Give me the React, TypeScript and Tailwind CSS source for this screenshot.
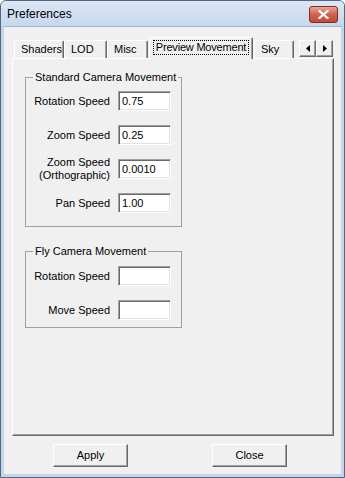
import React from "react";

const font = { fontFamily: '"Liberation Sans", Arial, sans-serif' };

const Edit = ({ value }: { value?: string }) => (
  <div className="w-[53px] h-[20px] bg-white border border-t-[#a0a0a0] border-l-[#a0a0a0] border-b-white border-r-white shadow-[inset_1px_1px_0_#696969,inset_-1px_-1px_0_#e3e3e3] flex items-center pl-[3px] text-[11px] text-black">
    {value}
  </div>
);

const Row = ({ label, value }: { label: React.ReactNode; value?: string }) => (
  <div className="flex items-center h-[20px]">
    <div className="w-[84px] text-right text-[11px] leading-[13px] text-black">{label}</div>
    <div className="ml-[8px]">
      <Edit value={value} />
    </div>
  </div>
);

const Group = ({ title, children, className }: { title: string; children: React.ReactNode; className?: string }) => (
  <fieldset className={"w-[157px] border border-[#a0a0a0] " + (className ?? "")}>
    <legend className="ml-[7px] px-[2px] text-[11px] leading-[13px] text-black">{title}</legend>
    {children}
  </fieldset>
);

const Tab = ({ label, width }: { label: string; width: string }) => (
  <div
    className={
      "h-[18px] border-t border-l border-t-white border-l-white border-r border-r-[#696969] shadow-[inset_-1px_0_0_#a0a0a0] rounded-t-[2px] flex items-center pl-[6px] text-[11px] text-black " +
      width
    }
  >
    {label}
  </div>
);

const RaisedBtn = ({ children, className }: { children: React.ReactNode; className?: string }) => (
  <div
    className={
      "bg-[#f0f0f0] border border-t-white border-l-white border-r-[#696969] border-b-[#696969] shadow-[inset_-1px_-1px_0_#a0a0a0] flex items-center justify-center text-[11px] text-black " +
      (className ?? "")
    }
  >
    {children}
  </div>
);

export default function App() {
  return (
    <div className="w-[345px] h-[478px] flex flex-col border border-[#56667c] rounded-t-[6px] bg-[#c3d5ec] overflow-hidden" style={font}>
      {/* title bar */}
      <div className="h-[25px] flex items-center bg-gradient-to-b from-[#dce7f5] to-[#c5d7ee] pl-[6px]">
        <span className="text-[12px] text-black">Preferences</span>
        <div className="ml-auto mr-[6px] mt-[2px] w-[29px] h-[17px] rounded-[3px] border border-[#7b2d22] bg-gradient-to-b from-[#e8a597] via-[#d1614d] to-[#c44a34] flex items-center justify-center">
          <svg width="11" height="9" viewBox="0 0 11 9">
            <path d="M1.5 1 L9.5 8 M9.5 1 L1.5 8" stroke="#ffffff" strokeWidth="2.2" strokeLinecap="square" />
          </svg>
        </div>
      </div>

      {/* client area */}
      <div className="mx-[3px] h-[448px] bg-[#f0f0f0] border-t border-[#9fb2cc] pt-[10px]">
        {/* tabs */}
        <div className="ml-[8px] flex items-end h-[21px]">
          <div className="ml-[2px]" />
          <Tab label="Shaders" width="w-[50px]" />
          <Tab label="LOD" width="w-[43px]" />
          <Tab label="Misc" width="w-[41px]" />
          <div className="ml-[1px] relative z-10 -mb-px h-[22px] w-[104px] bg-[#f0f0f0] border-t border-l border-t-white border-l-white border-r border-r-[#696969] shadow-[inset_-1px_0_0_#a0a0a0] rounded-t-[2px] flex items-center justify-center pb-[2px]">
            <span className="whitespace-nowrap border border-dotted border-black px-[2px] leading-[13px] text-[11px] tracking-[-0.2px] text-black">Preview Movement</span>
          </div>
          <div className="ml-[1px]" />
          <Tab label="Sky" width="w-[40px]" />
          <div className="ml-[5px] mb-[1px] flex">
            <RaisedBtn className="w-[17px] h-[17px]">
              <svg width="4" height="7" viewBox="0 0 4 7"><path d="M4 0 L0 3.5 L4 7 Z" fill="#000" /></svg>
            </RaisedBtn>
            <RaisedBtn className="w-[17px] h-[17px]">
              <svg width="4" height="7" viewBox="0 0 4 7"><path d="M0 0 L4 3.5 L0 7 Z" fill="#000" /></svg>
            </RaisedBtn>
          </div>
        </div>

        {/* tab page */}
        <div className="ml-[8px] w-[322px] h-[378px] border border-t-white border-l-white border-r-[#696969] border-b-[#696969] shadow-[inset_-1px_-1px_0_#a0a0a0] pl-[12px] pt-[12px]">
          <Group title="Standard Camera Movement" className="pb-[13px]">
            <div className="flex flex-col gap-[14px] mt-[7px]">
              <Row label="Rotation Speed" value="0.75" />
              <Row label="Zoom Speed" value="0.25" />
              <Row
                label={
                  <>
                    Zoom Speed
                    <br />
                    (Orthographic)
                  </>
                }
                value="0.0010"
              />
              <Row label="Pan Speed" value="1.00" />
            </div>
          </Group>

          <Group title="Fly Camera Movement" className="mt-[18px] pb-[7px]">
            <div className="flex flex-col gap-[14px] mt-[8px]">
              <Row label="Rotation Speed" />
              <Row label="Move Speed" />
            </div>
          </Group>
        </div>

        {/* buttons */}
        <div className="flex mt-[8px] pl-[49px] gap-[84px]">
          <RaisedBtn className="w-[75px] h-[23px]">Apply</RaisedBtn>
          <RaisedBtn className="w-[75px] h-[23px]">Close</RaisedBtn>
        </div>
      </div>
    </div>
  );
}
